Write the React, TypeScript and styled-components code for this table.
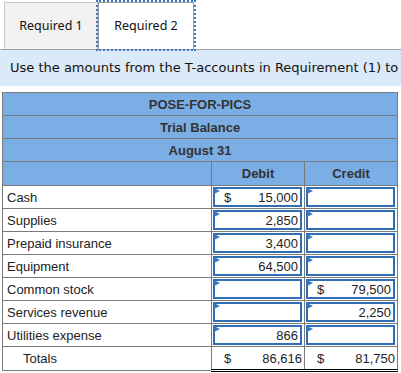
import React from "react";
import styled, { createGlobalStyle } from "styled-components";

interface Row {
	label: string;
	debit?: string;
	credit?: string;
	debitSign?: boolean;
	creditSign?: boolean;
}

const ROWS: Row[] = [
	{ label: "Cash", debit: "15,000", debitSign: true },
	{ label: "Supplies", debit: "2,850" },
	{ label: "Prepaid insurance", debit: "3,400" },
	{ label: "Equipment", debit: "64,500" },
	{ label: "Common stock", credit: "79,500", creditSign: true },
	{ label: "Services revenue", credit: "2,250" },
	{ label: "Utilities expense", debit: "866" },
];

const GlobalStyle = createGlobalStyle`
	body {
		margin: 0;
		background: #fff;
		font-family: "Liberation Sans", Arial, sans-serif;
	}
`;

const AmountBox = ({ value, sign }: { value?: string; sign?: boolean }) => (
	<BoxTag>
		<FlagTag />
		{sign && <span className="sign">$</span>}
		<span className="value">{value}</span>
	</BoxTag>
);

const App = () => {
	return (
		<PageTag>
			<GlobalStyle />
			<TabsTag>
				<TabTag>Required 1</TabTag>
				<TabTag $active>Required 2</TabTag>
			</TabsTag>
			<NoteTag>Use the amounts from the T-accounts in Requirement (1) to prepare a trial balance.</NoteTag>
			<TableTag>
				<colgroup>
					<col style={{ width: 209 }} />
					<col style={{ width: 93 }} />
					<col style={{ width: 93 }} />
				</colgroup>
				<thead>
					<tr>
						<HeadCell colSpan={3}>POSE-FOR-PICS</HeadCell>
					</tr>
					<tr>
						<HeadCell colSpan={3}>Trial Balance</HeadCell>
					</tr>
					<tr>
						<HeadCell colSpan={3}>August 31</HeadCell>
					</tr>
					<tr>
						<HeadCell $tall />
						<HeadCell $tall>Debit</HeadCell>
						<HeadCell $tall>Credit</HeadCell>
					</tr>
				</thead>
				<tbody>
					{ROWS.map((row) => (
						<tr key={row.label}>
							<LabelCell>{row.label}</LabelCell>
							<InputCell>
								<AmountBox value={row.debit} sign={row.debitSign} />
							</InputCell>
							<InputCell>
								<AmountBox value={row.credit} sign={row.creditSign} />
							</InputCell>
						</tr>
					))}
					<tr>
						<LabelCell $indent>Totals</LabelCell>
						<TotalCell>
							<span className="sign">$</span>
							<span>86,616</span>
						</TotalCell>
						<TotalCell>
							<span className="sign">$</span>
							<span>81,750</span>
						</TotalCell>
					</tr>
				</tbody>
			</TableTag>
		</PageTag>
	);
};

export default App;

const PageTag = styled.div`
	width: 401px;
	height: 373px;
	overflow: hidden;
`;

const TabsTag = styled.div`
	display: flex;
	align-items: flex-end;
	height: 49px;
	padding-left: 3px;
	border-bottom: 1px solid #a3a3a3;
	box-sizing: content-box;
`;

const TabTag = styled.div<{ $active?: boolean }>`
	display: flex;
	align-items: center;
	justify-content: center;
	box-sizing: border-box;
	width: ${(p) => (p.$active ? "96px" : "94px")};
	height: 47px;
	margin-left: ${(p) => (p.$active ? "0" : "1px")};
	font-family: "Noto Sans", "Open Sans", sans-serif;
	font-size: 12.5px;
	color: #111;
	background: ${(p) => (p.$active ? "#fff" : "#f2f2f2")};
	border: 1px solid ${(p) => (p.$active ? "#9a9a9a" : "#c8c8c8")};
	border-bottom: none;
	outline: ${(p) => (p.$active ? "2px dotted #3b78c4" : "none")};
	outline-offset: 0;
	padding-bottom: 1px;
`;

const NoteTag = styled.div`
	height: 36px;
	line-height: 36px;
	padding-left: 10px;
	background: #dbeaf8;
	font-family: "DejaVu Sans", Verdana, sans-serif;
	font-size: 13px;
	color: #111;
	white-space: nowrap;
	overflow: hidden;
`;

const TableTag = styled.table`
	margin: 6px 0 0 2px;
	width: 395px;
	table-layout: fixed;
	border-collapse: collapse;
	font-size: 13px;
	color: #222;
`;

const HeadCell = styled.th<{ $tall?: boolean }>`
	height: ${(p) => (p.$tall ? "23px" : "22px")};
	padding: 0;
	background: #7aaee4;
	border: 1px solid #7a7a7a;
	font-weight: bold;
	font-size: 13px;
	color: #333;
	text-align: center;
	vertical-align: middle;
`;

const LabelCell = styled.td<{ $indent?: boolean }>`
	height: 22px;
	padding: 0 0 0 ${(p) => (p.$indent ? "20px" : "4px")};
	border: 1px solid #7a7a7a;
	white-space: nowrap;
`;

const InputCell = styled.td`
	height: 22px;
	padding: 1px 2px 1px 1px;
	border: 1px solid #7a7a7a;
	box-sizing: border-box;
`;

const BoxTag = styled.div`
	position: relative;
	display: flex;
	align-items: center;
	justify-content: space-between;
	box-sizing: border-box;
	height: 20px;
	padding: 0 2px 0 9px;
	border: 2px solid #2f6db5;
	background: #fff;
	.value {
		margin-left: auto;
	}
`;

const FlagTag = styled.span`
	position: absolute;
	top: -1px;
	left: -1px;
	width: 0;
	height: 0;
	border-top: 3px solid transparent;
	border-bottom: 3px solid transparent;
	border-left: 6px solid #3b78c4;
`;

const TotalCell = styled.td`
	height: 22px;
	padding: 0 2px 0 12px;
	border: 1px solid #7a7a7a;
	border-bottom: 3px double #000;
	text-align: right;
	span {
		display: inline-block;
	}
	.sign {
		float: left;
	}
`;
